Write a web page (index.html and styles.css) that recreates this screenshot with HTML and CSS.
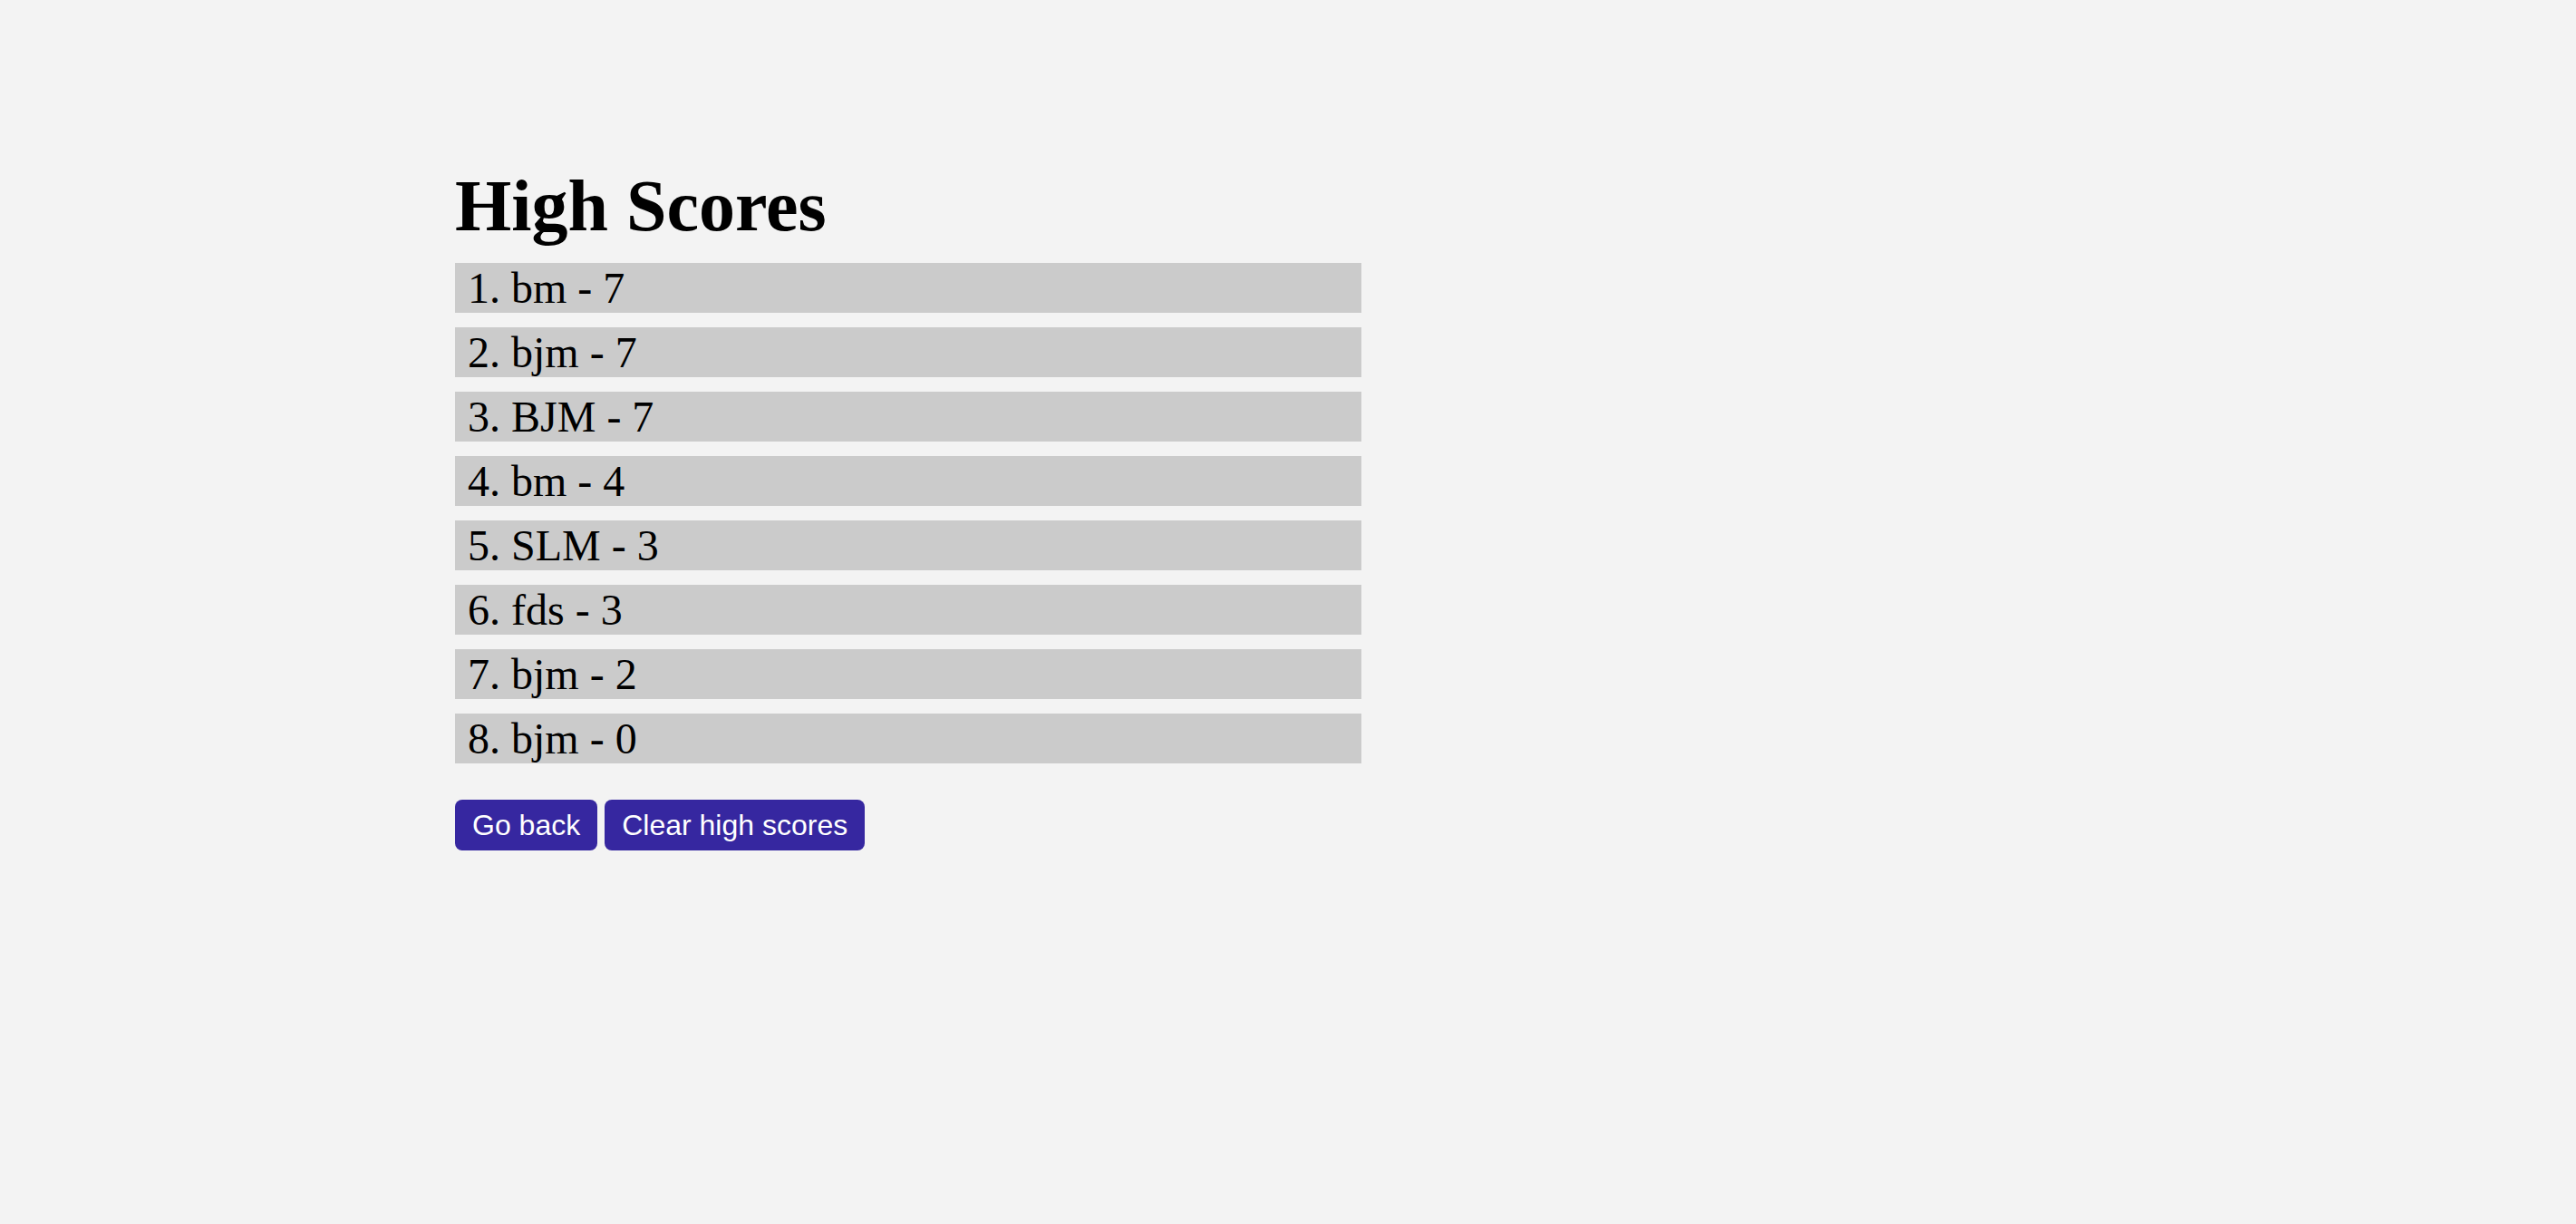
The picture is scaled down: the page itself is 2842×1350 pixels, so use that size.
FILE: index.html
```html
<!DOCTYPE html>
<html lang="en">
<head>
<meta charset="utf-8">
<title>High Scores</title>
<link rel="stylesheet" href="styles.css">
</head>
<body>
<main class="scores">
  <h1 class="title">High Scores</h1>
  <ol class="list">
    <li class="item">1. bm - 7</li>
    <li class="item">2. bjm - 7</li>
    <li class="item">3. BJM - 7</li>
    <li class="item">4. bm - 4</li>
    <li class="item">5. SLM - 3</li>
    <li class="item">6. fds - 3</li>
    <li class="item">7. bjm - 2</li>
    <li class="item">8. bjm - 0</li>
  </ol>
  <div class="actions">
    <button class="btn">Go back</button>
    <button class="btn">Clear high scores</button>
  </div>
</main>
</body>
</html>
```

FILE: styles.css
```css
html, body {
  margin: 0;
  padding: 0;
  background: #f3f3f3;
}

body {
  font-family: "Liberation Serif", "Times New Roman", serif;
  color: #000;
}

.scores {
  width: 1000px;
  margin-left: 502px;
  padding-top: 181px;
}

.title {
  margin: 0 0 17px;
  font-size: 80px;
  font-weight: bold;
  line-height: 92px;
}

.list {
  list-style: none;
  margin: 0;
  padding: 0;
  display: flex;
  flex-direction: column;
  gap: 16px;
}

.item {
  background: #cbcbcb;
  font-size: 48px;
  line-height: 55px;
  height: 55px;
  padding-left: 14px;
}

.actions {
  display: flex;
  gap: 8px;
  margin-top: 40px;
}

.btn {
  font-family: "Liberation Sans", Arial, sans-serif;
  font-size: 32px;
  line-height: 36px;
  padding: 10px 19px;
  background: #3627a0;
  color: #fff;
  border: none;
  border-radius: 8px;
  cursor: pointer;
}
```
